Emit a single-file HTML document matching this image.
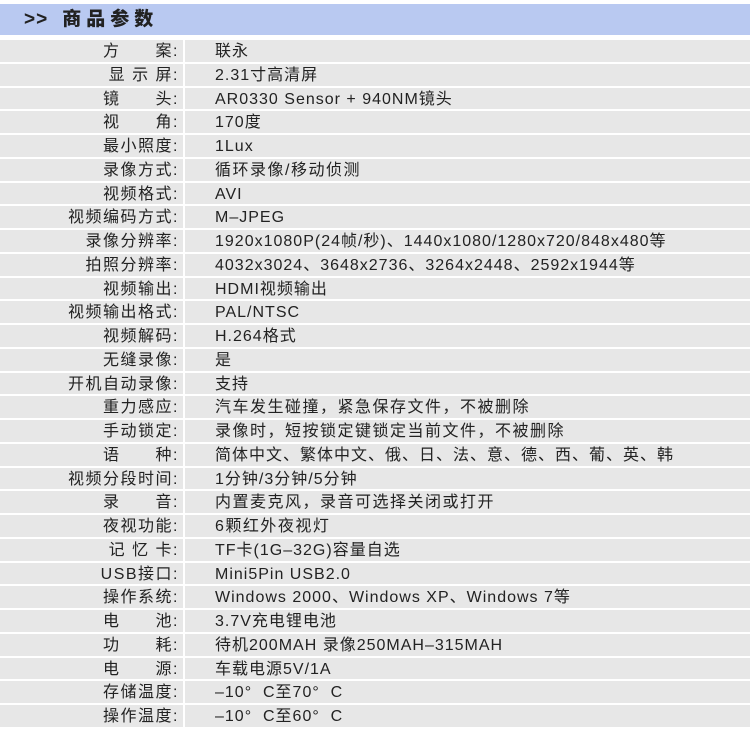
<!DOCTYPE html>
<html><head><meta charset="utf-8"><style>
body{margin:0;width:750px;height:731px;background:#fff;overflow:hidden;font-family:"Liberation Sans","Noto Sans CJK SC",sans-serif;color:#222}
.hd{position:absolute;left:0;top:4px;width:750px;height:31px;background:#b9c9f1;font-size:19px;font-weight:bold;line-height:31px;}
.hd span{position:absolute;left:24px;letter-spacing:1px}
.hd b{letter-spacing:5px;margin-left:14px}
.rows{position:absolute;top:40px;left:0;width:750px}
.r{height:21.75px;margin-bottom:2px;background:#e7e7e7;position:relative;font-size:16px;line-height:23px;letter-spacing:1px}
.l{position:absolute;right:571px;top:0;text-align:right;white-space:pre;letter-spacing:1.5px}
.s{position:absolute;left:183px;top:0;width:2px;height:24px;background:#fff}
.v{position:absolute;left:215px;top:0;white-space:nowrap}
.c{letter-spacing:1.5px}
</style></head><body>
<div class="hd"><span>&gt;&gt;<b>商品参数</b></span></div>
<div class="rows">
<div class="r"><span class="l">方　　案:</span><i class="s"></i><span class="v">联永</span></div>
<div class="r"><span class="l">显 示 屏:</span><i class="s"></i><span class="v">2.31寸高清屏</span></div>
<div class="r"><span class="l">镜　　头:</span><i class="s"></i><span class="v">AR0330 Sensor + 940NM镜头</span></div>
<div class="r"><span class="l">视　　角:</span><i class="s"></i><span class="v">170度</span></div>
<div class="r"><span class="l">最小照度:</span><i class="s"></i><span class="v">1Lux</span></div>
<div class="r"><span class="l">录像方式:</span><i class="s"></i><span class="v c">循环录像/移动侦测</span></div>
<div class="r"><span class="l">视频格式:</span><i class="s"></i><span class="v">AVI</span></div>
<div class="r"><span class="l">视频编码方式:</span><i class="s"></i><span class="v">M–JPEG</span></div>
<div class="r"><span class="l">录像分辨率:</span><i class="s"></i><span class="v">1920x1080P(24帧/秒)、1440x1080/1280x720/848x480等</span></div>
<div class="r"><span class="l">拍照分辨率:</span><i class="s"></i><span class="v">4032x3024、3648x2736、3264x2448、2592x1944等</span></div>
<div class="r"><span class="l">视频输出:</span><i class="s"></i><span class="v">HDMI视频输出</span></div>
<div class="r"><span class="l">视频输出格式:</span><i class="s"></i><span class="v">PAL/NTSC</span></div>
<div class="r"><span class="l">视频解码:</span><i class="s"></i><span class="v">H.264格式</span></div>
<div class="r"><span class="l">无缝录像:</span><i class="s"></i><span class="v">是</span></div>
<div class="r"><span class="l">开机自动录像:</span><i class="s"></i><span class="v">支持</span></div>
<div class="r"><span class="l">重力感应:</span><i class="s"></i><span class="v c">汽车发生碰撞，紧急保存文件，不被删除</span></div>
<div class="r"><span class="l">手动锁定:</span><i class="s"></i><span class="v c">录像时，短按锁定键锁定当前文件，不被删除</span></div>
<div class="r"><span class="l">语　　种:</span><i class="s"></i><span class="v">简体中文、繁体中文、俄、日、法、意、德、西、葡、英、韩</span></div>
<div class="r"><span class="l">视频分段时间:</span><i class="s"></i><span class="v">1分钟/3分钟/5分钟</span></div>
<div class="r"><span class="l">录　　音:</span><i class="s"></i><span class="v c">内置麦克风，录音可选择关闭或打开</span></div>
<div class="r"><span class="l">夜视功能:</span><i class="s"></i><span class="v c">6颗红外夜视灯</span></div>
<div class="r"><span class="l">记 忆 卡:</span><i class="s"></i><span class="v">TF卡(1G–32G)容量自选</span></div>
<div class="r"><span class="l">USB接口:</span><i class="s"></i><span class="v">Mini5Pin USB2.0</span></div>
<div class="r"><span class="l">操作系统:</span><i class="s"></i><span class="v">Windows 2000、Windows XP、Windows 7等</span></div>
<div class="r"><span class="l">电　　池:</span><i class="s"></i><span class="v">3.7V充电锂电池</span></div>
<div class="r"><span class="l">功　　耗:</span><i class="s"></i><span class="v">待机200MAH 录像250MAH–315MAH</span></div>
<div class="r"><span class="l">电　　源:</span><i class="s"></i><span class="v">车载电源5V/1A</span></div>
<div class="r"><span class="l">存储温度:</span><i class="s"></i><span class="v">–10°&nbsp; C至70°&nbsp; C</span></div>
<div class="r"><span class="l">操作温度:</span><i class="s"></i><span class="v">–10°&nbsp; C至60°&nbsp; C</span></div>
</div>
</body></html>
